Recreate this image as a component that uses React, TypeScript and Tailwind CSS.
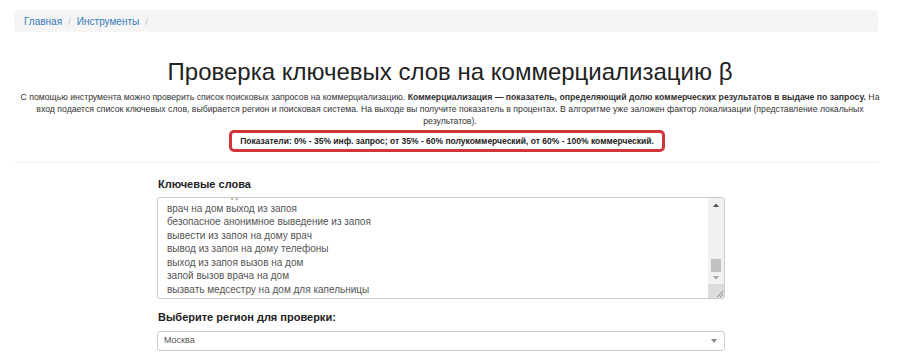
const keywords = [
  "частный вывод из запоя",
  "врач на дом выход из запоя",
  "безопасное анонимное выведение из запоя",
  "вывести из запоя на дому врач",
  "вывод из запоя на дому телефоны",
  "выход из запоя вызов на дом",
  "запой вызов врача на дом",
  "вызвать медсестру на дом для капельницы",
];

export default function App() {
  return (
    <div className="min-h-[360px] bg-white font-['Liberation_Sans',Arial,sans-serif] text-[#333]">
      {/* breadcrumb */}
      <div className="pt-[10px] px-[14px] pr-[22px]">
        <div className="h-[22px] bg-[#f5f5f5] rounded-[3px] flex items-center px-[10px] text-[10px]">
          <span className="text-[#337ab7]">Главная</span>
          <span className="text-[#ccc] px-[6px]">/</span>
          <span className="text-[#337ab7]">Инструменты</span>
          <span className="text-[#ccc] px-[6px]">/</span>
        </div>
      </div>

      {/* title */}
      <h1 className="mt-[26px] text-center text-[24px] leading-[28px] font-normal text-[#222]">
        Проверка ключевых слов на коммерциализацию β
      </h1>

      <p className="mt-[5px] px-[18px] text-center text-[8.7px] leading-[12px] text-[#333]">
        С помощью инструмента можно проверить список поисковых запросов на коммерциализацию.{" "}
        <b>Коммерциализация — показатель, определяющий долю коммерческих результатов в выдаче по запросу.</b>{" "}
        На вход подается список ключевых слов, выбирается регион и поисковая система. На выходе вы получите
        показатель в процентах. В алгоритме уже заложен фактор локализации (представление локальных
        результатов).
      </p>

      <div className="flex justify-center mt-[3px] pr-[6px]">
        <div className="border-[3px] border-[#d1343b] rounded-[5px] px-[8px] h-[22px] flex items-center text-[8.5px] font-bold text-[#222]">
          Показатели: 0% - 35% инф. запрос; от 35% - 60% полукоммерческий, от 60% - 100% коммерческий.
        </div>
      </div>

      <div className="mt-[10px] mx-[14px] mr-[22px] border-t border-[#eee]" />

      {/* form */}
      <div className="ml-[157px] w-[568px] pt-[14px]">
        <div className="text-[11px] font-bold text-[#222] leading-[14px] pl-[1px]">Ключевые слова</div>
        <div className="mt-[6px] h-[102px] border border-[#ccc] rounded-[3px] flex overflow-hidden">
          <div className="flex-1 overflow-hidden pl-[9px]">
            <div className="-mt-[10px] text-[10px] leading-[13.5px] text-[#555]">
              {keywords.map((k) => (
                <div key={k}>{k}</div>
              ))}
            </div>
          </div>
          <div className="w-[16px] bg-[#f1f1f1] flex flex-col items-center">
            <svg width="16" height="14" viewBox="0 0 16 14">
              <path d="M5 9 L8 5.5 L11 9 Z" fill="#505050" />
            </svg>
            <div className="flex-1" />
            <div className="w-[10px] h-[13px] bg-[#c1c1c1]" />
            <svg width="16" height="12" viewBox="0 0 16 12">
              <path d="M5 4 L8 7.5 L11 4 Z" fill="#a3a3a3" />
            </svg>
            <div className="w-[16px] h-[14px] bg-[#dcdcdc] flex items-end justify-end">
              <svg width="10" height="10" viewBox="0 0 10 10">
                <path d="M9 3 L3 9 M9 6 L6 9" stroke="#888" strokeWidth="1" />
              </svg>
            </div>
          </div>
        </div>

        <div className="mt-[11px] text-[11px] font-bold text-[#222] leading-[14px] pl-[1px]">
          Выберите регион для проверки:
        </div>
        <div className="mt-[7px] h-[20px] border border-[#ccc] rounded-[3px] flex items-center justify-between px-[6px] text-[9px] text-[#555]">
          <span>Москва</span>
          <svg width="8" height="6" viewBox="0 0 8 6">
            <path d="M1 1 L4 5 L7 1 Z" fill="#888" />
          </svg>
        </div>
      </div>
    </div>
  );
}
